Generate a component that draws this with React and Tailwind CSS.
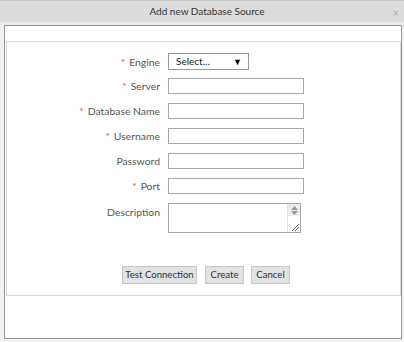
import React from "react";

const F = { fontFamily: 'Lato, "Open Sans", "Liberation Sans", sans-serif' };

function Label({ req, children }) {
  return (
    <div className="w-[153px] shrink-0 text-right text-[10.4px] leading-[16px] text-[#555]">
      {req && <span className="text-[#e5534b] mr-[4px]">*</span>}
      {children}
    </div>
  );
}

function Input() {
  return <div className="w-[136px] h-[16px] border border-[#a8a8a8] bg-white" />;
}

const btn = "h-[18px] bg-[#e2e2e2] border border-[#c6c6c6] text-[9.6px] leading-[16px] text-[#333]";

export default function App() {
  return (
    <div style={F} className="w-[404px] h-[342px] bg-[#f1f1f1] overflow-hidden flex flex-col">
      <div className="h-[22px] shrink-0 bg-[#dcdcdc] border-t border-[#c8c8c8] flex items-center justify-center relative">
        <span className="text-[10px] text-[#333] pl-[10px]">Add new Database Source</span>
        <span className="absolute right-[5px] top-[4px] text-[11px] text-[#b0b0b0]">×</span>
      </div>
      <div className="h-[3px] shrink-0 bg-[#ececec]" />
      <div className="ml-[4px] w-[398px] h-[314px] border border-[#8e9b9b] bg-white flex flex-col">
        <div className="h-[15px] shrink-0" />
        <div className="ml-[1px] w-[395px] h-[255px] border border-[#d6d6d6] flex flex-col pt-[11px]">
          <div className="flex items-center gap-[8px] h-[17px]">
            <Label req>Engine</Label>
            <div className="w-[81px] h-[17px] border border-[#999] bg-white flex items-center justify-between pl-[7px] pr-[6px] text-[10px] text-[#222]">
              <span>Select...</span>
              <span className="text-[9px] text-black">▼</span>
            </div>
          </div>
          <div className="flex flex-col gap-[9px] mt-[8px]">
            <div className="flex items-center gap-[8px]"><Label req>Server</Label><Input /></div>
            <div className="flex items-center gap-[8px]"><Label req>Database Name</Label><Input /></div>
            <div className="flex items-center gap-[8px]"><Label req>Username</Label><Input /></div>
            <div className="flex items-center gap-[8px]"><Label>Password</Label><Input /></div>
            <div className="flex items-center gap-[8px]"><Label req>Port</Label><Input /></div>
            <div className="flex items-start gap-[8px]">
              <div className="pt-[1px]"><Label>Description</Label></div>
              <div className="w-[133px] h-[30px] border border-[#a8a8a8] bg-white flex justify-end">
                <div className="w-[13px] h-full flex flex-col border-l border-[#e6e6e6]">
                  <div className="h-[12px] bg-[#ececec] flex flex-col items-center justify-center gap-[1px]">
                    <svg width="7" height="4" viewBox="0 0 7 4"><path d="M0 4 L3.5 0 L7 4Z" fill="#9a9a9a" /></svg>
                    <svg width="7" height="4" viewBox="0 0 7 4"><path d="M0 0 L3.5 4 L7 0Z" fill="#9a9a9a" /></svg>
                  </div>
                  <div className="flex-1 flex items-end justify-end pr-[1px] pb-[1px]">
                    <svg width="8" height="8" viewBox="0 0 8 8"><path d="M1 8 L8 1 M4 8 L8 4" stroke="#777" strokeWidth="1" /></svg>
                  </div>
                </div>
              </div>
            </div>
          </div>
          <div className="flex ml-[115px] mt-[33px]">
            <button className={`${btn} w-[75px]`}>Test Connection</button>
            <button className={`${btn} w-[39px] ml-[8px]`}>Create</button>
            <button className={`${btn} w-[39px] ml-[7px]`}>Cancel</button>
          </div>
        </div>
      </div>
    </div>
  );
}
